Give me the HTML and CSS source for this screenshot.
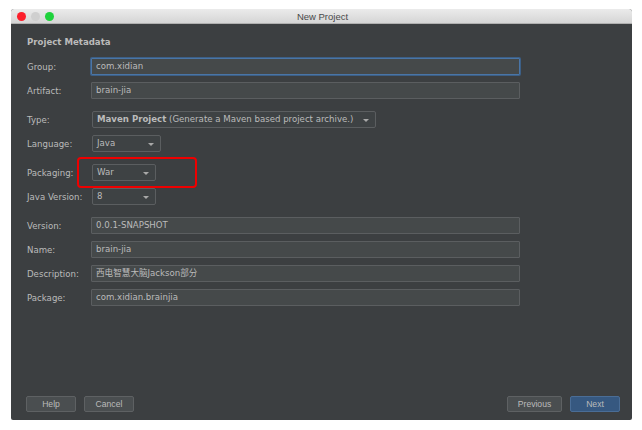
FILE: index.html
```html
<!DOCTYPE html>
<html>
<head>
<meta charset="utf-8">
<link rel="stylesheet" href="styles.css">
</head>
<body>
<div class="window">
  <div class="titlebar">
    <div class="lights">
      <span class="light red"></span>
      <span class="light gray"></span>
      <span class="light green"></span>
    </div>
    <div class="title">New Project</div>
  </div>
  <div class="content">
    <div class="heading">Project Metadata</div>
    <div class="form">
      <div class="row"><span class="label">Group:</span><div class="field focused">com.xidian</div></div>
      <div class="row"><span class="label">Artifact:</span><div class="field">brain-jia</div></div>
      <div class="row sep"><span class="label">Type:</span><div class="combo type"><span><b>Maven Project</b> (Generate a Maven based project archive.)</span><span class="arrow"></span></div></div>
      <div class="row"><span class="label">Language:</span><div class="combo lang"><span>Java</span><span class="arrow"></span></div></div>
      <div class="row sep packrow"><span class="label">Packaging:</span><div class="combo pack"><span>War</span><span class="arrow"></span></div><div class="highlight"></div></div>
      <div class="row"><span class="label">Java Version:</span><div class="combo pack"><span>8</span><span class="arrow"></span></div></div>
      <div class="row sep"><span class="label">Version:</span><div class="field">0.0.1-SNAPSHOT</div></div>
      <div class="row"><span class="label">Name:</span><div class="field">brain-jia</div></div>
      <div class="row"><span class="label">Description:</span><div class="field">西电智慧大脑Jackson部分</div></div>
      <div class="row"><span class="label">Package:</span><div class="field">com.xidian.brainjia</div></div>
    </div>
    <div class="buttons">
      <div class="btn">Help</div>
      <div class="btn">Cancel</div>
      <div class="spacer"></div>
      <div class="btn prev">Previous</div>
      <div class="btn primary">Next</div>
    </div>
  </div>
</div>
</body>
</html>
```

FILE: styles.css
```css
* { box-sizing: border-box; }
html, body { margin: 0; padding: 0; background: #ffffff; }
body {
  width: 642px;
  height: 430px;
  overflow: hidden;
  font-family: "DejaVu Sans", "Noto Sans CJK SC", sans-serif;
}
.window {
  margin: 9px 0 0 11px;
  width: 621px;
  height: 411px;
  display: flex;
  flex-direction: column;
  background: #3c3f41;
  border-radius: 3px 3px 2px 2px;
  overflow: hidden;
}
.titlebar {
  position: relative;
  height: 15px;
  flex: none;
  background: linear-gradient(#ebebeb, #d5d5d5);
  border-bottom: 1px solid #b0b0b0;
  display: flex;
  align-items: center;
  justify-content: center;
}
.lights {
  position: absolute;
  left: 6px;
  top: 3px;
  display: flex;
  gap: 5px;
}
.light {
  width: 9px;
  height: 9px;
  border-radius: 50%;
  display: block;
}
.light.red { background: #fc1f2b; }
.light.gray { background: #cfcfcf; }
.light.green { background: #1fd23c; }
.title {
  font-family: "Liberation Sans", Arial, sans-serif;
  font-size: 9.5px;
  color: #4a4a4a;
  margin-left: 2px;
}
.content {
  flex: 1;
  display: flex;
  flex-direction: column;
  padding: 11px 12px 8px 15px;
  color: #bbbbbb;
  font-size: 8.6px;
}
.heading {
  font-weight: bold;
  padding-left: 1px;
  height: 14px;
  line-height: 14px;
  font-size: 8.6px;
}
.form {
  margin-top: 9px;
  display: flex;
  flex-direction: column;
  gap: 7px;
}
.row {
  position: relative;
  display: flex;
  align-items: center;
  height: 17px;
}
.row.sep { margin-top: 5px; }
.label {
  width: 65px;
  padding-left: 1px;
  flex: none;
}
.field {
  width: 429px;
  height: 17px;
  line-height: 15px;
  background: #45494a;
  border: 1px solid #5b5e60;
  border-radius: 1px;
  padding-left: 4px;
  white-space: nowrap;
}
.field.focused {
  border-color: #4a75a6;
  box-shadow: 0 0 0 1px #3c5f86;
}
.combo {
  height: 17px;
  line-height: 15px;
  margin-left: 1px;
  border: 1px solid #5b5e60;
  border-radius: 2px;
  background: #3e4244;
  padding: 0 6px 0 4px;
  display: flex;
  align-items: center;
  justify-content: space-between;
  white-space: nowrap;
}
.combo.type { width: 284px; }
.combo.lang { width: 69px; }
.combo.pack { width: 64px; }
.arrow {
  width: 0;
  height: 0;
  border-left: 3.5px solid transparent;
  border-right: 3.5px solid transparent;
  border-top: 3.5px solid #a8a8a8;
  margin-top: 1px;
}
.highlight {
  position: absolute;
  left: 51px;
  top: -7px;
  width: 120px;
  height: 31px;
  border: 2px solid #ee0000;
  border-radius: 4px;
}
.buttons {
  margin-top: auto;
  display: flex;
  align-items: center;
  gap: 8px;
}
.spacer { flex: 1; }
.btn {
  height: 16px;
  width: 50px;
  border: 1px solid #5e6163;
  border-radius: 2px;
  background: #4a4e50;
  font-family: "Liberation Sans", Arial, sans-serif;
  font-size: 8.6px;
  color: #bbbbbb;
  display: flex;
  align-items: center;
  justify-content: center;
}
.btn.prev { width: 55px; }
.btn.primary {
  background: #365880;
  border-color: #4a6d96;
}
```
